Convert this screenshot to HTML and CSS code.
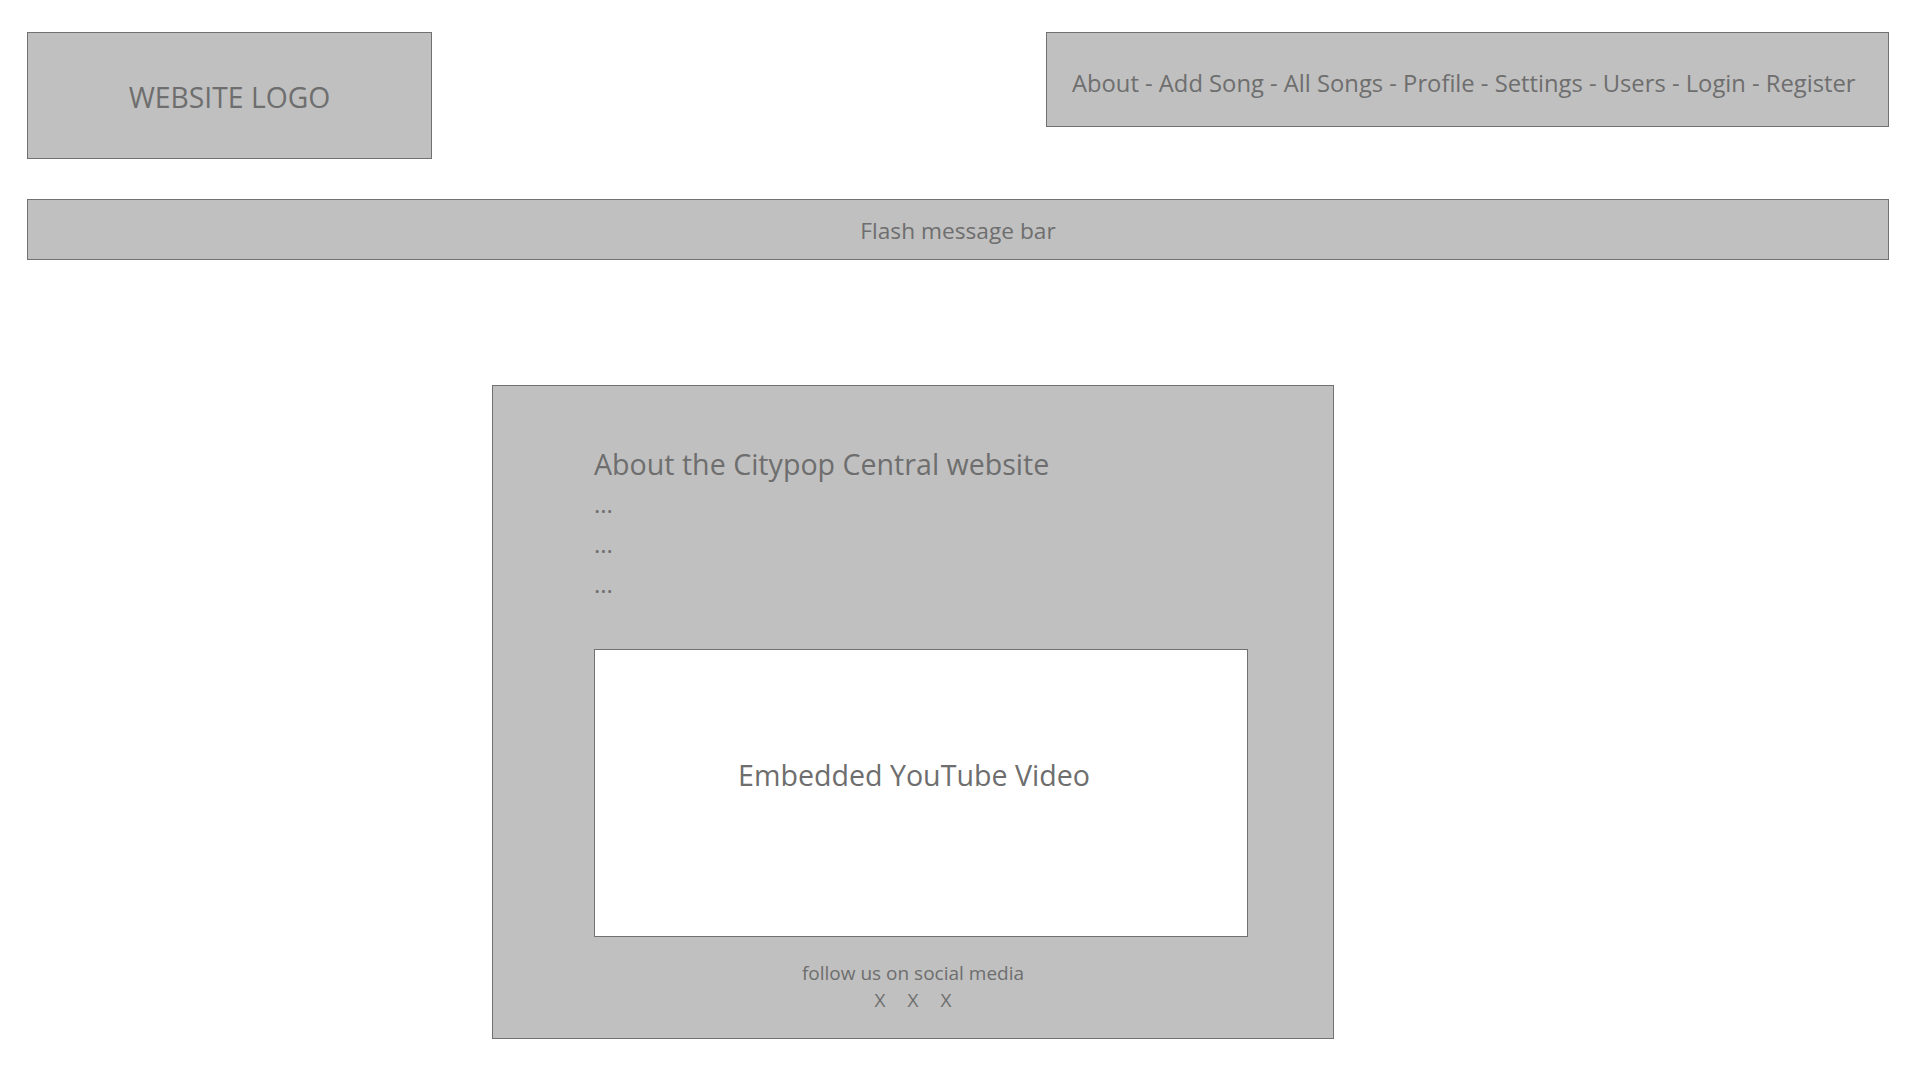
FILE: index.html
```html
<!DOCTYPE html>
<html>
<head>
<meta charset="utf-8">
<title>Citypop Central - About</title>
<link rel="stylesheet" href="styles.css">
</head>
<body>
<header class="top">
  <div class="logo">WEBSITE LOGO</div>
  <nav class="nav">About - Add Song - All Songs - Profile - Settings - Users - Login - Register</nav>
</header>
<div class="flash">Flash message bar</div>
<main class="card">
  <h1 class="title">About the Citypop Central website</h1>
  <p class="dots">...</p>
  <p class="dots">...</p>
  <p class="dots">...</p>
  <div class="video">Embedded YouTube Video</div>
  <div class="social">
    <div class="follow">follow us on social media</div>
    <div class="icons"><span>X</span><span>X</span><span>X</span></div>
  </div>
</main>
</body>
</html>
```
FILE: styles.css
```css
html, body {
  margin: 0;
  padding: 0;
  background: #ffffff;
}
body {
  font-family: "Open Sans", "Noto Sans", sans-serif;
  color: #6e6e6e;
}
.top {
  display: flex;
  justify-content: space-between;
  align-items: flex-start;
  padding: 32px 31px 0 27px;
}
.logo {
  box-sizing: border-box;
  width: 405px;
  height: 127px;
  background: #c0c0c0;
  border: 1px solid #717171;
  display: flex;
  align-items: center;
  justify-content: center;
  font-size: 28.3px;
  padding-top: 3px;
}
.nav {
  box-sizing: border-box;
  width: 843px;
  height: 95px;
  background: #c0c0c0;
  border: 1px solid #717171;
  display: flex;
  align-items: center;
  padding: 6px 0 0 25px;
  font-size: 23.75px;
  white-space: nowrap;
}
.flash {
  box-sizing: border-box;
  margin: 40px 31px 0 27px;
  height: 61px;
  background: #c0c0c0;
  border: 1px solid #717171;
  display: flex;
  align-items: center;
  justify-content: center;
  font-size: 22.7px;
  padding-top: 1px;
}
.card {
  box-sizing: border-box;
  margin: 125px 0 0 492px;
  width: 842px;
  height: 654px;
  background: #c0c0c0;
  border: 1px solid #717171;
  padding: 58px 0 0 101px;
}
.title {
  margin: 0;
  font-size: 28.6px;
  font-weight: 400;
  line-height: 40px;
}
.dots {
  margin: 0;
  font-size: 24px;
  line-height: 40px;
}
.video {
  box-sizing: border-box;
  margin-top: 45px;
  width: 654px;
  height: 288px;
  background: #ffffff;
  border: 1px solid #717171;
  display: flex;
  align-items: center;
  justify-content: center;
  font-size: 28.6px;
  padding: 0 14px 38px 0;
}
.social {
  box-sizing: border-box;
  width: 840px;
  margin-left: -101px;
  text-align: center;
  margin-top: 23px;
}
.follow {
  font-size: 19px;
  line-height: 26px;
}
.icons {
  display: flex;
  justify-content: center;
  gap: 22px;
  font-size: 19px;
  line-height: 28px;
}
```
